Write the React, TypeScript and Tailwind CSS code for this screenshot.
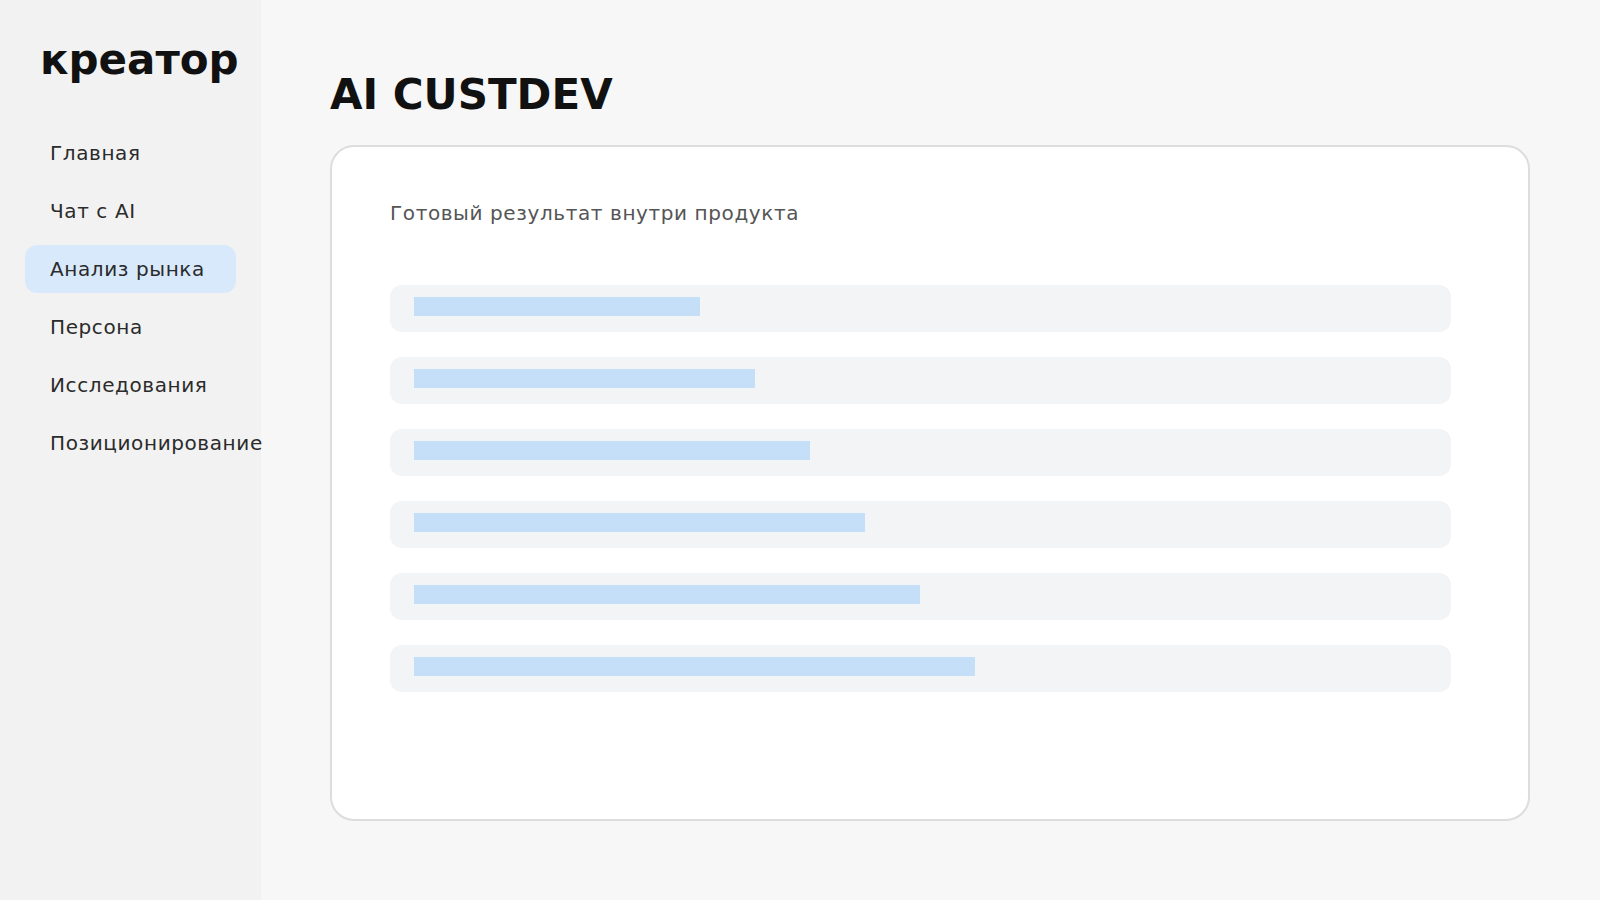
import { useState } from "react";

const NAV_ITEMS = [
  "Главная",
  "Чат с AI",
  "Анализ рынка",
  "Персона",
  "Исследования",
  "Позиционирование",
];

// placeholder bars in the preview grow step by step
const BAR_WIDTHS = [286, 341, 396, 451, 506, 561];

function Sidebar({
  active,
  onSelect,
}: {
  active: string;
  onSelect: (v: string) => void;
}) {
  return (
    <aside className="min-h-screen w-[261px] shrink-0 bg-[#f2f2f2]">
      <div className="px-10 pt-[35px] text-[42px] font-bold leading-[50px] text-[#111111]">
        креатор
      </div>
      <nav className="mt-[44px] flex flex-col gap-[10px] px-[25px]">
        {NAV_ITEMS.map((item) => (
          <button
            key={item}
            type="button"
            onClick={() => onSelect(item)}
            className={
              item === active
                ? "flex h-12 items-center whitespace-nowrap rounded-xl bg-[#d9e9fc] px-[25px] text-left text-[20px] tracking-[0.6px] text-[#2b2b2b]"
                : "flex h-12 items-center whitespace-nowrap rounded-xl px-[25px] text-left text-[20px] tracking-[0.6px] text-[#2b2b2b]"
            }
          >
            {item}
          </button>
        ))}
      </nav>
    </aside>
  );
}

export default function App() {
  const [active, setActive] = useState("Анализ рынка");

  return (
    <div
      className="flex min-h-screen bg-[#f7f7f7]"
      style={{ fontFamily: '"DejaVu Sans", "Noto Sans", sans-serif' }}
    >
      <Sidebar active={active} onSelect={setActive} />
      <main className="flex-1 pl-[69px] pr-[70px] pt-[70px]">
        <h1 className="text-[42px] font-bold leading-[50px] text-[#111111]">AI CUSTDEV</h1>
        <section className="mt-[25px] h-[676px] rounded-[24px] border-2 border-[#dddddd] bg-white px-[58px] pt-[51px]">
          <p className="text-[20px] tracking-[0.6px] text-[#555555]">
            Готовый результат внутри продукта
          </p>
          <div className="mt-[57px] flex w-[1061px] flex-col gap-[25px]">
            {BAR_WIDTHS.map((w) => (
              <div key={w} className="h-[47px] rounded-xl bg-[#f3f4f6] px-6 pt-3">
                <div className="h-[19px] bg-[#c4dff7]" style={{ width: w }} />
              </div>
            ))}
          </div>
        </section>
      </main>
    </div>
  );
}
